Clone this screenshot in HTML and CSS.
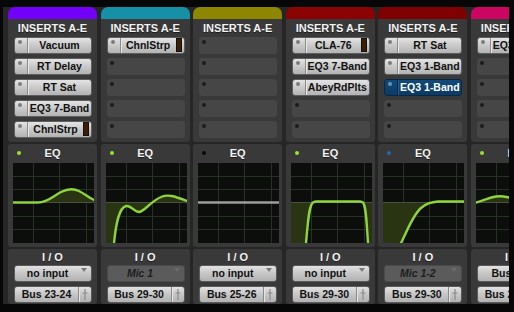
FILE: index.html
```html
<!DOCTYPE html>
<html>
<head>
<meta charset="utf-8">
<link rel="stylesheet" href="styles.css">
</head>
<body>
<div class="mixer">

  <!-- Channel 1 -->
  <div class="ch">
    <div class="tab purple"></div>
    <div class="panel inserts">
      <div class="hdr">INSERTS A-E</div>
      <div class="slots">
        <div class="slot on"><span class="led"></span><span class="name">Vacuum</span></div>
        <div class="slot on"><span class="led"></span><span class="name">RT Delay</span></div>
        <div class="slot on"><span class="led"></span><span class="name">RT Sat</span></div>
        <div class="slot on"><span class="led"></span><span class="name">EQ3 7-Band</span></div>
        <div class="slot on"><span class="led"></span><span class="name">ChnlStrp</span><span class="meter"></span></div>
      </div>
    </div>
    <div class="panel eq">
      <div class="hdr"><span class="dot green"></span>EQ</div>
      <svg class="graph" viewBox="0 0 81 80" width="81" height="80">
        <rect width="81" height="80" class="bg"/>
        <path class="grid" d="M20.5 0V80M46.5 0V80M73.5 0V80M0 13.5H81M0 26.5H81M0 53.5H81M0 66.5H81"/>
        <path class="zero" d="M0 39.5H81"/>
        <path class="fill" d="M0 39.5L25 39.5C35 39.5 40 33 48 29C54 26 60 25 66 28C72 31 76 35 81 37L81 39.5Z"/>
        <path class="curve" d="M0 39.5L25 39.5C35 39.5 40 33 48 29C54 26 60 25 66 28C72 31 76 35 81 37"/>
      </svg>
    </div>
    <div class="panel io">
      <div class="hdr">I / O</div>
      <div class="btn in"><span class="lbl">no input</span><span class="tri"></span></div>
      <div class="btn out"><span class="lbl">Bus 23-24</span><span class="pin"><svg viewBox="0 0 12 15" width="12" height="15"><path d="M6 2V13M3.5 6H8.5" /></svg></span></div>
    </div>
  </div>

  <!-- Channel 2 -->
  <div class="ch">
    <div class="tab teal"></div>
    <div class="panel inserts">
      <div class="hdr">INSERTS A-E</div>
      <div class="slots">
        <div class="slot on"><span class="led"></span><span class="name">ChnlStrp</span><span class="meter"></span></div>
        <div class="slot"><span class="led"></span></div>
        <div class="slot"><span class="led"></span></div>
        <div class="slot"><span class="led"></span></div>
        <div class="slot"><span class="led"></span></div>
      </div>
    </div>
    <div class="panel eq">
      <div class="hdr"><span class="dot green"></span>EQ</div>
      <svg class="graph" viewBox="0 0 81 80" width="81" height="80">
        <rect width="81" height="80" class="bg"/>
        <path class="grid" d="M20.5 0V80M46.5 0V80M73.5 0V80M0 13.5H81M0 26.5H81M0 53.5H81M0 66.5H81"/>
        <path class="zero" d="M0 39.5H81"/>
        <path class="fill" d="M0 80L8 80C10 60 13 45 20 43C25 42 28 49 33 49C38 49 45 38 55 34C62 31 68 33 81 38L81 39.5L0 39.5Z"/>
        <path class="curve" d="M8 80C10 60 13 45 20 43C25 42 28 49 33 49C38 49 45 38 55 34C62 31 68 33 81 38"/>
      </svg>
    </div>
    <div class="panel io">
      <div class="hdr">I / O</div>
      <div class="btn in dim"><span class="lbl">Mic 1</span><span class="tri"></span></div>
      <div class="btn out"><span class="lbl">Bus 29-30</span><span class="pin"><svg viewBox="0 0 12 15" width="12" height="15"><path d="M6 2V13M3.5 6H8.5" /></svg></span></div>
    </div>
  </div>

  <!-- Channel 3 -->
  <div class="ch">
    <div class="tab olive"></div>
    <div class="panel inserts">
      <div class="hdr">INSERTS A-E</div>
      <div class="slots">
        <div class="slot"><span class="led"></span></div>
        <div class="slot"><span class="led"></span></div>
        <div class="slot"><span class="led"></span></div>
        <div class="slot"><span class="led"></span></div>
        <div class="slot"><span class="led"></span></div>
      </div>
    </div>
    <div class="panel eq">
      <div class="hdr"><span class="dot black"></span>EQ</div>
      <svg class="graph" viewBox="0 0 81 80" width="81" height="80">
        <rect width="81" height="80" class="bg"/>
        <path class="grid" d="M20.5 0V80M46.5 0V80M73.5 0V80M0 13.5H81M0 26.5H81M0 53.5H81M0 66.5H81"/>
        <path class="flat" d="M0 39.5H81"/>
      </svg>
    </div>
    <div class="panel io">
      <div class="hdr">I / O</div>
      <div class="btn in"><span class="lbl">no input</span><span class="tri"></span></div>
      <div class="btn out"><span class="lbl">Bus 25-26</span><span class="pin"><svg viewBox="0 0 12 15" width="12" height="15"><path d="M6 2V13M3.5 6H8.5" /></svg></span></div>
    </div>
  </div>

  <!-- Channel 4 -->
  <div class="ch">
    <div class="tab red"></div>
    <div class="panel inserts">
      <div class="hdr">INSERTS A-E</div>
      <div class="slots">
        <div class="slot on"><span class="led"></span><span class="name">CLA-76</span><span class="meter"></span></div>
        <div class="slot on"><span class="led"></span><span class="name">EQ3 7-Band</span></div>
        <div class="slot on"><span class="led"></span><span class="name">AbeyRdPlts</span></div>
        <div class="slot"><span class="led"></span></div>
        <div class="slot"><span class="led"></span></div>
      </div>
    </div>
    <div class="panel eq">
      <div class="hdr"><span class="dot green"></span>EQ</div>
      <svg class="graph" viewBox="0 0 81 80" width="81" height="80">
        <rect width="81" height="80" class="bg"/>
        <path class="grid" d="M20.5 0V80M46.5 0V80M73.5 0V80M0 13.5H81M0 26.5H81M0 53.5H81M0 66.5H81"/>
        <path class="zero" d="M0 39.5H81"/>
        <path class="fill" d="M0 39.5L22 39.5C18 43 17 58 15 80L0 80Z"/>
        <path class="fill" d="M72 39.5L81 39.5L81 80L77 80C75 58 74.5 43 72 39.5Z"/>
        <path class="curve" d="M15 80C17 58 18 42 22 39.5C23 38.8 24 38.5 26 38.5L68 38.5C70 38.5 71 38.8 72 39.5C75 43 75.5 58 77 80"/>
      </svg>
    </div>
    <div class="panel io">
      <div class="hdr">I / O</div>
      <div class="btn in"><span class="lbl">no input</span><span class="tri"></span></div>
      <div class="btn out"><span class="lbl">Bus 29-30</span><span class="pin"><svg viewBox="0 0 12 15" width="12" height="15"><path d="M6 2V13M3.5 6H8.5" /></svg></span></div>
    </div>
  </div>

  <!-- Channel 5 -->
  <div class="ch">
    <div class="tab darkred"></div>
    <div class="panel inserts">
      <div class="hdr">INSERTS A-E</div>
      <div class="slots">
        <div class="slot on"><span class="led"></span><span class="name">RT Sat</span></div>
        <div class="slot on"><span class="led"></span><span class="name">EQ3 1-Band</span></div>
        <div class="slot sel"><span class="led"></span><span class="name">EQ3 1-Band</span></div>
        <div class="slot"><span class="led"></span></div>
        <div class="slot"><span class="led"></span></div>
      </div>
    </div>
    <div class="panel eq">
      <div class="hdr"><span class="dot blue"></span>EQ</div>
      <svg class="graph" viewBox="0 0 81 80" width="81" height="80">
        <rect width="81" height="80" class="bg"/>
        <path class="grid" d="M20.5 0V80M46.5 0V80M73.5 0V80M0 13.5H81M0 26.5H81M0 53.5H81M0 66.5H81"/>
        <path class="zero" d="M0 39.5H81"/>
        <path class="fill" d="M0 39.5L0 80L18 80C25 66 30 52 38 45C42 41.5 46 39.8 50 39.5Z"/>
        <path class="curve" d="M18 80C25 66 30 52 38 45C43 40.5 47 39 55 38.5L81 38.5"/>
      </svg>
    </div>
    <div class="panel io">
      <div class="hdr">I / O</div>
      <div class="btn in dim"><span class="lbl">Mic 1-2</span><span class="tri"></span></div>
      <div class="btn out"><span class="lbl">Bus 29-30</span><span class="pin"><svg viewBox="0 0 12 15" width="12" height="15"><path d="M6 2V13M3.5 6H8.5" /></svg></span></div>
    </div>
  </div>

  <!-- Channel 6 (partially visible) -->
  <div class="ch">
    <div class="tab magenta"></div>
    <div class="panel inserts">
      <div class="hdr">INSERTS A-E</div>
      <div class="slots">
        <div class="slot on"><span class="led"></span><span class="name">EQ3 7-Band</span></div>
        <div class="slot"><span class="led"></span></div>
        <div class="slot"><span class="led"></span></div>
        <div class="slot"><span class="led"></span></div>
        <div class="slot"><span class="led"></span></div>
      </div>
    </div>
    <div class="panel eq">
      <div class="hdr"><span class="dot green"></span>EQ</div>
      <svg class="graph" viewBox="0 0 81 80" width="81" height="80">
        <rect width="81" height="80" class="bg"/>
        <path class="grid" d="M20.5 0V80M46.5 0V80M73.5 0V80M0 13.5H81M0 26.5H81M0 53.5H81M0 66.5H81"/>
        <path class="zero" d="M0 39.5H81"/>
        <path class="fill" d="M0 39.5C6 38 12 35 20 33.5C26 32.5 30 34 36 35C46 37 60 38.5 81 39L81 39.5Z"/>
        <path class="curve" d="M0 39.5C6 38 12 35 20 33.5C26 32.5 30 34 36 35C46 37 60 38.5 81 39"/>
      </svg>
    </div>
    <div class="panel io">
      <div class="hdr">I / O</div>
      <div class="btn in"><span class="lbl">Bus 1-2</span><span class="tri"></span></div>
      <div class="btn out"><span class="lbl">Bus 25-26</span><span class="pin"><svg viewBox="0 0 12 15" width="12" height="15"><path d="M6 2V13M3.5 6H8.5" /></svg></span></div>
    </div>
  </div>

</div>
</body>
</html>
```

FILE: styles.css
```css
html, body {
  margin: 0;
  padding: 0;
}
body {
  width: 514px;
  height: 312px;
  background: #070707;
  overflow: hidden;
  font-family: "Liberation Sans", Arial, sans-serif;
}
.mixer {
  display: flex;
  gap: 3.6px;
  width: 501px;
  height: 297px;
  margin: 7px 0 0 3px;
  padding-left: 5px;
  background: #262626;
  overflow: hidden;
}
.ch {
  flex: 0 0 89px;
  display: flex;
  flex-direction: column;
  gap: 2px;
}
.tab {
  height: 12px;
  border-radius: 7px 7px 0 0;
  margin-bottom: -2px;
}
.purple { background: #7300f8; }
.teal { background: #1590a6; }
.olive { background: #8d8700; }
.red { background: #8c0303; }
.darkred { background: #7f0000; }
.magenta { background: #cc0660; }

.panel {
  background: #393939;
  border-radius: 0 0 3px 3px;
}
.panel.eq, .panel.io {
  border-radius: 3px;
}
.hdr {
  color: #f2f2f2;
  font-weight: bold;
  font-size: 11px;
  text-align: center;
  position: relative;
  text-shadow: 0 1px 0 rgba(0,0,0,0.5);
}
.inserts {
  height: 123px;
}
.inserts .hdr {
  height: 18px;
  line-height: 18px;
}
.slots {
  display: flex;
  flex-direction: column;
  gap: 4px;
  margin-left: 6px;
  width: 78px;
}
.slot {
  height: 17px;
  box-sizing: border-box;
  border-radius: 3px;
  background: #464646;
  display: flex;
  align-items: stretch;
  font-size: 10.5px;
  font-weight: bold;
}
.led {
  position: relative;
  width: 12px;
  flex: 0 0 12px;
}
.led::after {
  content: "";
  position: absolute;
  left: 3px;
  top: 3px;
  width: 4px;
  height: 4px;
  border-radius: 50%;
  background: #1c1c1c;
}
.slot.on {
  background: linear-gradient(#e4e4e4, #c9c9c9 50%, #b3b3b3);
  border: 1px solid #5e5e5e;
  color: #111;
}
.slot.on .led, .slot.sel .led {
  border-right: 1px solid #8a8a8a;
  box-shadow: 1px 0 0 #e8e8e8;
}
.slot.on .led::after {
  left: 3px;
  top: 2px;
  background: #7c7c7c;
}
.slot.sel {
  background: linear-gradient(#124a7a, #0b3a64);
  border: 1px solid #082744;
  color: #fff;
}
.slot.sel .led {
  border-right: 1px solid #072a48;
  box-shadow: 1px 0 0 #2a5d8a;
}
.slot.sel .led::after {
  left: 3px;
  top: 2px;
  background: #6d93b6;
}
.name {
  flex: 1;
  text-align: center;
  line-height: 15px;
  white-space: nowrap;
  overflow: hidden;
}
.meter {
  flex: 0 0 6px;
  box-sizing: border-box;
  margin: 0 2px 1px 0;
  background: #3f1c02;
  border: 1px solid #111;
}

.eq {
  height: 103px;
}
.eq .hdr {
  height: 19px;
  line-height: 18px;
}
.dot {
  position: absolute;
  left: 9px;
  top: 7px;
  width: 4px;
  height: 4px;
  border-radius: 50%;
}
.dot.green { background: #9be42a; }
.dot.black { background: #0a0a0a; }
.dot.blue { background: #1d6aa8; }
.graph {
  display: block;
  margin-left: 5px;
}
.graph .bg { fill: #0c0e0c; }
.graph .grid { stroke: #283028; stroke-width: 1; fill: none; }
.graph .zero { stroke: #6d6d6d; stroke-width: 1; fill: none; }
.graph .flat { stroke: #9d9d9d; stroke-width: 2.5; fill: none; }
.graph .fill { fill: #293512; }
.graph .curve { stroke: #8fd43c; stroke-width: 2.4; fill: none; stroke-linecap: round; stroke-linejoin: round; }

.io {
  flex: 1;
}
.io .hdr {
  height: 16px;
  line-height: 17px;
}
.btn {
  margin-left: 6px;
  width: 78px;
  height: 17px;
  box-sizing: border-box;
  border-radius: 3px;
  display: flex;
  font-size: 10.5px;
  font-weight: bold;
  color: #111;
  background: linear-gradient(#e2e2e2, #c6c6c6 50%, #b2b2b2);
  border: 1px solid #5a5a5a;
}
.btn + .btn {
  margin-top: 4px;
}
.btn .lbl {
  flex: 1;
  text-align: center;
  line-height: 15px;
  white-space: nowrap;
  overflow: hidden;
}
.btn.in .lbl {
  padding-left: 1px;
}
.tri {
  flex: 0 0 12px;
  position: relative;
}
.tri::after {
  content: "";
  position: absolute;
  left: 2px;
  top: 2px;
  border-left: 3.5px solid transparent;
  border-right: 3.5px solid transparent;
  border-top: 4px solid #7a7a7a;
}
.btn.dim {
  background: #5b5b5b;
  border-color: #4a4a4a;
  color: #1d1d1d;
}
.btn.dim .lbl {
  font-style: italic;
}
.btn.dim .tri::after {
  border-top-color: #6b6b6b;
}
.pin {
  flex: 0 0 12px;
  border-left: 1px solid #8a8a8a;
  box-shadow: inset 1px 0 0 #e6e6e6;
}
.pin svg {
  display: block;
}
.pin path {
  stroke: #8a8a8a;
  stroke-width: 1.2;
  fill: none;
}
```
